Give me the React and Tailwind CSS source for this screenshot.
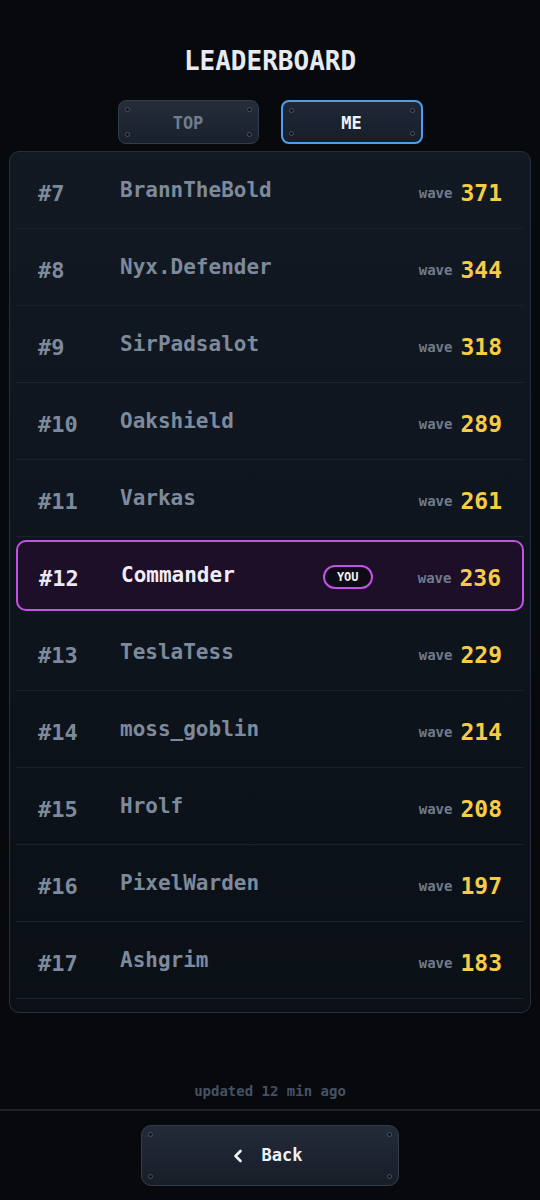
import React from "react";

const rows = [
  { rank: 7, name: "BrannTheBold", wave: 371 },
  { rank: 8, name: "Nyx.Defender", wave: 344 },
  { rank: 9, name: "SirPadsalot", wave: 318 },
  { rank: 10, name: "Oakshield", wave: 289 },
  { rank: 11, name: "Varkas", wave: 261 },
  { rank: 12, name: "Commander", wave: 236, me: true },
  { rank: 13, name: "TeslaTess", wave: 229 },
  { rank: 14, name: "moss_goblin", wave: 214 },
  { rank: 15, name: "Hrolf", wave: 208 },
  { rank: 16, name: "PixelWarden", wave: 197 },
  { rank: 17, name: "Ashgrim", wave: 183 },
];

const mono = { fontFamily: '"DejaVu Sans Mono", "Liberation Mono", monospace' };

function Screws() {
  const s = "absolute h-[5px] w-[5px] rounded-full border border-[#4a5566] bg-[#0d1118]";
  return (
    <>
      <span className={`${s} left-[6px] top-[6px]`} />
      <span className={`${s} right-[6px] top-[6px]`} />
      <span className={`${s} left-[6px] bottom-[6px]`} />
      <span className={`${s} right-[6px] bottom-[6px]`} />
    </>
  );
}

function Score({ wave }) {
  return (
    <div className="flex items-center gap-[8px]">
      <span className="text-[14px] font-bold text-[#6f7b8c]">wave</span>
      <span className="text-[23px] font-bold text-[#f7cc45]">{wave}</span>
    </div>
  );
}

function Row({ row }) {
  if (row.me) {
    return (
      <div className="h-[77px] py-[3px]">
        <div className="flex h-full items-center rounded-[10px] border-2 border-[#c352e6] bg-[#1d0f27] pl-[21px] pr-[21px] pt-[5px]">
          <div className="w-[82px] text-[22px] font-bold text-[#ece6f5]">#{row.rank}</div>
          <div className="flex-1 -translate-y-[2px] text-[21px] font-bold text-[#f1edf7]">{row.name}</div>
          <div className="mr-[45px] flex h-[24px] w-[50px] -translate-y-[1px] items-center justify-center rounded-full border-2 border-[#c352e6] bg-[#0f0b16] text-[12px] font-bold text-[#f0eef5]">
            YOU
          </div>
          <Score wave={row.wave} />
        </div>
      </div>
    );
  }
  return (
    <div className="flex h-[77px] items-center border-b border-[#19212c] pl-[22px] pr-[22px] pt-[6px]">
      <div className="w-[82px] text-[22px] font-bold text-[#7d8a9c]">#{row.rank}</div>
      <div className="flex-1 -translate-y-[2px] text-[21px] font-bold text-[#7d8a9c]">{row.name}</div>
      <Score wave={row.wave} />
    </div>
  );
}

export default function App() {
  return (
    <div className="flex h-[1200px] w-[540px] flex-col bg-[#07090d]" style={mono}>
      <h1 className="pt-[44px] text-center text-[26px] font-bold leading-[34px] text-[#e6eaf2]">
        LEADERBOARD
      </h1>

      <div className="mt-[22px] flex justify-center gap-[22px]">
        <button className="relative flex h-[44px] w-[141px] items-center justify-center rounded-[8px] border border-[#333c4a] bg-gradient-to-b from-[#252d3a] to-[#1a212c] pt-[3px] text-[17px] font-bold text-[#6f7d90]">
          <Screws />
          TOP
        </button>
        <button className="relative flex h-[44px] w-[142px] items-center justify-center rounded-[8px] border-2 border-[#4d9ff0] bg-gradient-to-b from-[#1f2837] to-[#171e2b] pt-[3px] text-[17px] font-bold text-[#eef2f8]">
          <Screws />
          ME
        </button>
      </div>

      <div className="mx-[9px] mt-[7px] rounded-[10px] border border-[#262f3b] bg-gradient-to-b from-[#121923] to-[#0b1017] px-[6px] pb-[13px]">
        {rows.map((r) => (
          <Row key={r.rank} row={r} />
        ))}
      </div>

      <div className="flex-1" />

      <div className="pb-[7px] text-center text-[14px] font-bold text-[#465264]">updated 12 min ago</div>
      <div className="h-[2px] bg-[#1b222c]" />
      <div className="flex justify-center pt-[14px] pb-[14px]">
        <button className="relative flex h-[61px] w-[258px] items-center justify-center gap-[18px] rounded-[10px] border border-[#333c4a] bg-gradient-to-b from-[#232b38] to-[#181e28] pr-[6px] text-[17px] font-bold text-[#eef2f8]">
          <Screws />
          <svg width="12" height="16" viewBox="0 0 12 16" fill="none">
            <path d="M8.5 3 L3.5 8 L8.5 13" stroke="#eef2f8" strokeWidth="2.6" strokeLinecap="round" strokeLinejoin="round" />
          </svg>
          <span>Back</span>
        </button>
      </div>
    </div>
  );
}
